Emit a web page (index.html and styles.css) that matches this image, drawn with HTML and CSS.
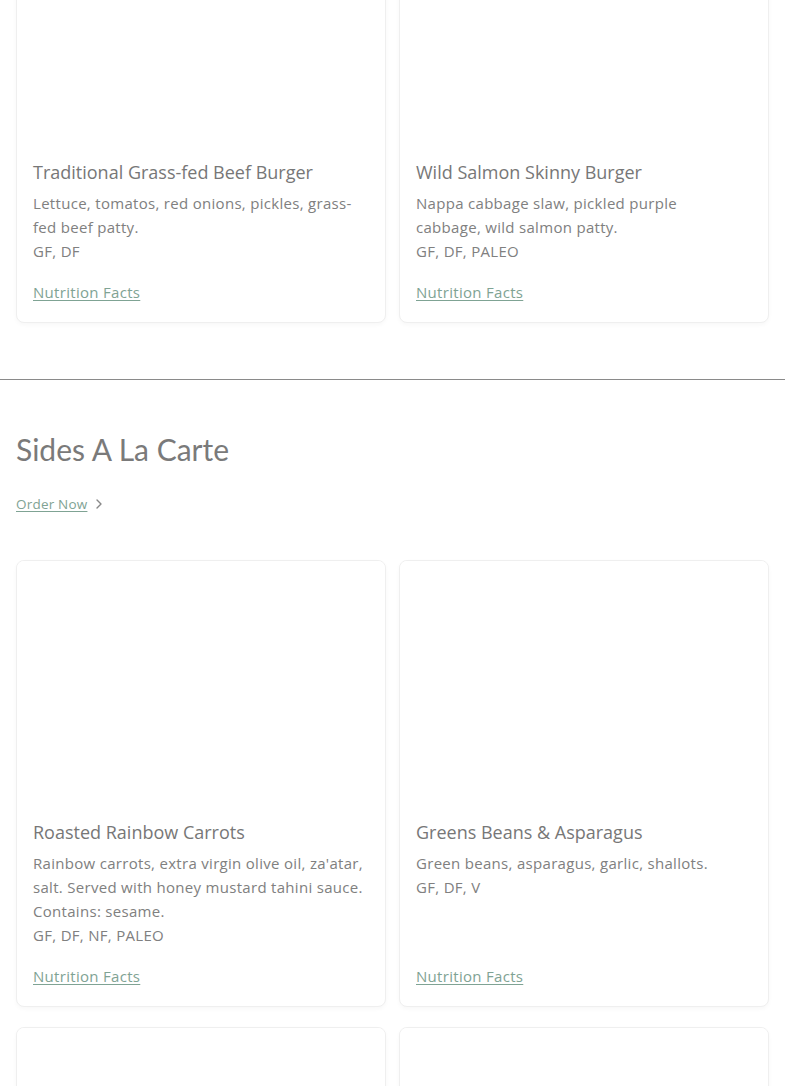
FILE: index.html
```html
<!DOCTYPE html>
<html>
<head>
<meta charset="utf-8">
<link rel="stylesheet" href="styles.css">
</head>
<body>
<section class="section section-first">
  <div class="grid">
    <article class="card">
      <div class="card-img"></div>
      <div class="card-body">
        <h3 class="card-title">Traditional Grass-fed Beef Burger</h3>
        <p class="card-desc">Lettuce, tomatos, red onions, pickles, grass-fed beef patty.</p>
        <p class="card-tags">GF, DF</p>
        <a class="card-link" href="#">Nutrition Facts</a>
      </div>
    </article>
    <article class="card">
      <div class="card-img"></div>
      <div class="card-body">
        <h3 class="card-title">Wild Salmon Skinny Burger</h3>
        <p class="card-desc">Nappa cabbage slaw, pickled purple<br>cabbage, wild salmon patty.</p>
        <p class="card-tags">GF, DF, PALEO</p>
        <a class="card-link" href="#">Nutrition Facts</a>
      </div>
    </article>
  </div>
</section>
<hr class="divider">
<section class="section section-sides">
  <h2 class="section-title">Sides A La Carte</h2>
  <a class="order-link" href="#"><span class="order-text">Order Now</span>
    <svg class="chev" width="8" height="12" viewBox="0 0 8 12"><path d="M2 2l4 4-4 4" fill="none" stroke="#888" stroke-width="1.4" stroke-linecap="round" stroke-linejoin="round"/></svg>
  </a>
  <div class="grid">
    <article class="card">
      <div class="card-img"></div>
      <div class="card-body">
        <h3 class="card-title">Roasted Rainbow Carrots</h3>
        <p class="card-desc">Rainbow carrots, extra virgin olive oil, za'atar, salt. Served with honey mustard tahini sauce. Contains: sesame.</p>
        <p class="card-tags">GF, DF, NF, PALEO</p>
        <a class="card-link" href="#">Nutrition Facts</a>
      </div>
    </article>
    <article class="card">
      <div class="card-img"></div>
      <div class="card-body">
        <h3 class="card-title">Greens Beans &amp; Asparagus</h3>
        <p class="card-desc">Green beans, asparagus, garlic, shallots.</p>
        <p class="card-tags">GF, DF, V</p>
        <a class="card-link" href="#">Nutrition Facts</a>
      </div>
    </article>
    <article class="card">
      <div class="card-img"></div>
    </article>
    <article class="card">
      <div class="card-img"></div>
    </article>
  </div>
</section>
</body>
</html>
```
FILE: styles.css
```css
html, body {
  margin: 0;
  padding: 0;
  background: #fff;
}
body {
  font-family: "Open Sans", "Liberation Sans", sans-serif;
  color: #7a7a7a;
  overflow: hidden;
}
.section {
  padding: 0 16px;
}
.section-first {
  margin-top: -100px;
  padding-bottom: 56px;
}
.grid {
  display: grid;
  grid-template-columns: 370px 370px;
  column-gap: 13px;
  row-gap: 20px;
}
.card {
  border: 1px solid #efefef;
  border-radius: 8px;
  box-shadow: 0 2px 4px rgba(0,0,0,0.03);
  background: #fff;
  display: flex;
  flex-direction: column;
  overflow: hidden;
}
.card-img {
  height: 243px;
  background: #fff;
}
.card-body {
  padding: 16px 16px 18px;
  display: flex;
  flex-direction: column;
  flex: 1;
}
.card-title {
  margin: 0 0 7px;
  font-size: 18px;
  line-height: 24px;
  font-weight: 400;
  color: #777;
}
.card-desc, .card-tags {
  margin: 0;
  font-size: 15px;
  line-height: 24px;
  letter-spacing: 0.3px;
  color: #808080;
}
.card-link {
  margin-top: auto;
  padding-top: 17px;
  font-size: 15px;
  line-height: 24px;
  letter-spacing: 0.3px;
  color: #7fa394;
  text-decoration: underline;
  text-underline-offset: 2px;
  align-self: flex-start;
}
.divider {
  margin: 0;
  border: 0;
  border-top: 1px solid #8a8a8a;
}
.section-title {
  margin: 51px 0 25px;
  font-family: "Lato", "Open Sans", sans-serif;
  font-weight: 400;
  font-size: 30px;
  line-height: 36px;
  color: #7a7a7a;
}
.order-link {
  display: inline-flex;
  align-items: center;
  gap: 8px;
  font-size: 13.5px;
  line-height: 20px;
  letter-spacing: 0.2px;
  color: #7fa394;
  text-decoration: none;
}
.order-text {
  text-decoration: underline;
  text-underline-offset: 2px;
}
.chev {
  display: block;
}
.section-sides > .grid {
  margin-top: 46px;
}
```
